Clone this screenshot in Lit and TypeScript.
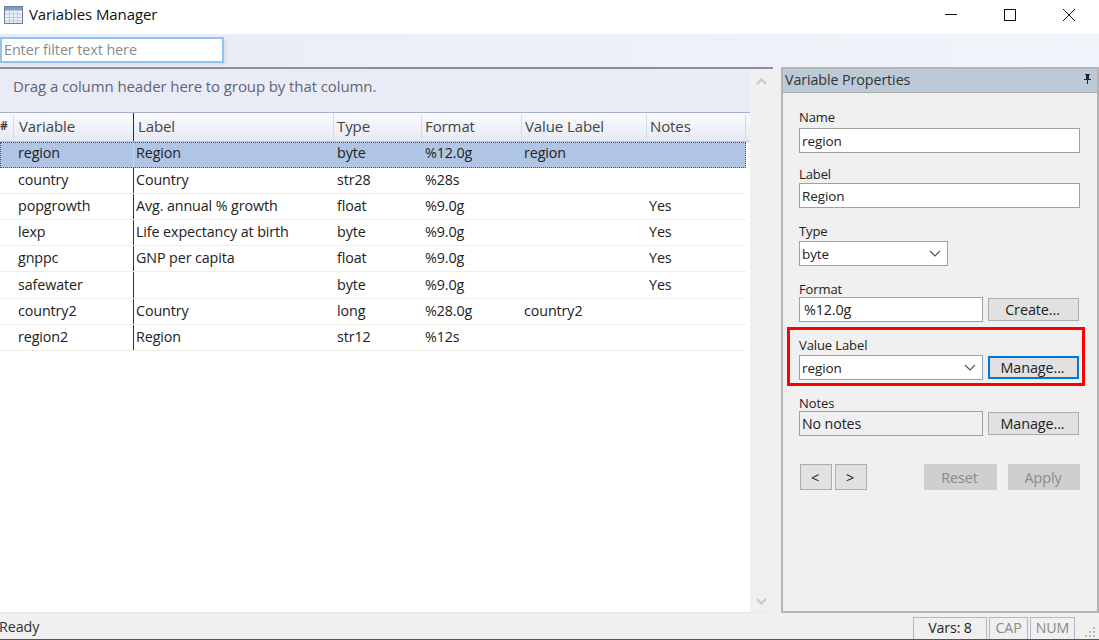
import { LitElement, html, css, svg } from "lit";
import { customElement } from "lit/decorators.js";

const rows = [
  ["region", "Region", "byte", "%12.0g", "region", ""],
  ["country", "Country", "str28", "%28s", "", ""],
  ["popgrowth", "Avg. annual % growth", "float", "%9.0g", "", "Yes"],
  ["lexp", "Life expectancy at birth", "byte", "%9.0g", "", "Yes"],
  ["gnppc", "GNP per capita", "float", "%9.0g", "", "Yes"],
  ["safewater", "", "byte", "%9.0g", "", "Yes"],
  ["country2", "Country", "long", "%28.0g", "country2", ""],
  ["region2", "Region", "str12", "%12s", "", ""],
];
const heads = ["Variable", "Label", "Type", "Format", "Value Label", "Notes"];
const chevron = svg`<svg class="chev" width="12" height="7" viewBox="0 0 12 7"><path d="M1 1l5 5 5-5" fill="none" stroke="#555" stroke-width="1.2"/></svg>`;

@customElement("app-root")
export class AppRoot extends LitElement {
  static styles = css`
    :host { display: flex; flex-direction: column; width: 1099px; height: 640px; overflow: hidden; background: #fff; color: #222;
      font-family: "Open Sans", "Noto Sans", sans-serif; font-size: 14.3px; letter-spacing: -0.1px; }
    .title { height: 34px; flex: none; display: flex; align-items: center; padding: 0 1px 0 4px; color: #111; }
    .title .name { flex: 1; font-size: 15px; margin-bottom: 6px; margin-left: 6px; }
    .appicon { margin-bottom: 4px; }
    .wb { width: 59px; display: flex; justify-content: center; margin-bottom: 4px; }
    .toolbar { height: 33px; flex: none; background: linear-gradient(90deg, #e9ecf6, #f1f4fb); display: flex; align-items: center; box-sizing: border-box; padding-bottom: 1px; }
    .filter { width: 224px; height: 26px; box-sizing: border-box; border: 2px solid #8fc3f0; background: #fff; color: #8a8a8a; padding-left: 2px; line-height: 22px; font-size: 14.4px; box-shadow: 3px 2px 2px rgba(0,0,0,.05); }
    .main { height: 546px; flex: none; display: flex; background: #f0f0f0; }
    .left { width: 773px; flex: none; display: flex; flex-direction: column; border-top: 2px solid #8b8f96; border-bottom: 1px solid #e6e6e6; box-sizing: border-box; background: #fff; position: relative; }
    .content { width: 750px; flex: 1; display: flex; flex-direction: column; }
    .group { height: 44px; flex: none; box-sizing: border-box; background: #e9ecf6; border-bottom: 1px solid #a9aecb; color: #5f6478; display: flex; align-items: center; padding: 0 0 10px 13px; font-size: 15px; }
    .head { height: 28.5px; flex: none; box-sizing: border-box; display: flex; background: linear-gradient(#fafbfe, #e6e9f4); border-bottom: 1px solid #b9c4de; font-size: 15px; }
    .row { height: 26.2px; display: flex; box-sizing: border-box; width: 746px; border-bottom: 1px solid #efeee6; }
    .row.sel { background: #afc5e3; outline: 1px dotted #555; outline-offset: -1px; border-bottom-color: transparent; }
    .c { box-sizing: border-box; white-space: nowrap; display: flex; align-items: center; overflow: hidden; padding-bottom: 2px; }
    .sel .c { padding-bottom: 3px; }
    .c0 { width: 14px; font-weight: 700; font-size: 12px; }
    .c1 { width: 119px; padding-left: 4px; }
    .c2 { width: 201px; padding-left: 2px; border-left: 1px solid #1c1cc4; }
    .c3 { width: 88px; padding-left: 3px; }
    .c4 { width: 100px; padding-left: 3px; }
    .c5 { width: 125px; padding-left: 2px; }
    .c6 { width: 99px; padding-left: 2px; }
    .head .c { color: #444; border-right: 1px solid #d5d9e8; margin: 2px 0; }
    .head .c1 { border-right: none; padding-left: 5px; }
    .head .c2 { padding-left: 4px; margin: 0; }
    .head .c3, .head .c4, .head .c5, .head .c6 { padding-left: 3px; }
    .row .c2.hl { border-left-color: #e8e060; }
    .scroll { position: absolute; right: 0; top: 0; bottom: 0; width: 23px; background: #f0f0f0; display: flex; flex-direction: column; justify-content: space-between; align-items: center; padding: 9px 0 7px; box-sizing: border-box; }
    .panel { margin-left: 8px; width: 318px; box-sizing: border-box; border: 2px solid #b4b4b4; display: flex; flex-direction: column; }
    .ptitle { height: 21px; flex: none; background: #bccad8; border-bottom: 1px solid #a9a9a9; display: flex; align-items: center; justify-content: space-between; padding: 0 5px 2px 2px; color: #333; font-size: 14.3px; box-sizing: content-box; }
    .pbody { flex: 1; padding: 16px 17px 0 16px; display: flex; flex-direction: column; font-size: 13.5px; }
    .lab { line-height: 16px; color: #222; height: 16px; font-size: 13px; }
    .fld { height: 25px; box-sizing: border-box; border: 1px solid #a0a0a0; background: #fff; display: flex; align-items: center; justify-content: space-between; padding: 0 6px 0 2px; margin-top: 3px; }
    .frow { display: flex; gap: 5px; align-items: center; }
    .frow .fld { width: 184px; margin-top: 0; }
    .btn { height: 23px; box-sizing: border-box; border: 1px solid #adadad; background: #e1e1e1; display: flex; align-items: center; justify-content: center; color: #222; width: 91px; font-size: 14.4px; padding-right: 2px; }
    .btn.focus { border: 2px solid #0078d7; }
    .btn.dis { background: #cfcfcf; color: #8a8a8a; border-color: #cfcfcf; }
    .gap { margin-top: 15px; }
    .gap2 { margin-top: 13px; }
    .box { position: relative; margin-top: 15px; }
    .box .frow { margin-top: 2px; }
    .red { position: absolute; left: -12px; right: -5px; top: -10px; bottom: -6px; border: 3px solid #f00; }
    .notes { margin-top: 15px; }
    .notes .fld { background: #f0f0f0; font-size: 14.2px; }
    .nav { display: flex; margin-top: 28px; padding-left: 1px; }
    .nav .btn { height: 26px; }
    .nav .btn.s { width: 32px; margin-right: 3px; }
    .nav .sp { flex: 1; }
    .nav .r { width: 73px; margin-right: 11px; }
    .nav .a { width: 72px; }
    .status { height: 26px; flex: none; background: #f0f0f0; box-sizing: border-box; display: flex; align-items: flex-end; }
    .ready { flex: 1; color: #333; line-height: 24px; margin-left: -1px; }
    .pane { height: 22px; box-sizing: border-box; border: 1px solid #b5b5c8; border-bottom: none; margin-right: 2px; display: flex; align-items: center; justify-content: center; font-size: 14.2px; padding-bottom: 3px; }
    .pane.off { color: #888; }
    .grip { width: 10px; height: 10px; margin: 0 4px 2px 10px; }
    .base { height: 1px; flex: none; background: #555; }
  `;

  renderRow(r: string[], i: number) {
    return html`<div class="row ${i === 0 ? "sel" : ""}">
      <div class="c c0"></div>
      <div class="c c1">${r[0]}</div>
      <div class="c c2 ${i === 0 ? "hl" : ""}">${r[1]}</div>
      <div class="c c3">${r[2]}</div>
      <div class="c c4">${r[3]}</div>
      <div class="c c5">${r[4]}</div>
      <div class="c c6">${r[5]}</div>
    </div>`;
  }

  render() {
    return html`
      <div class="title">
        <svg class="appicon" width="19" height="18" viewBox="0 0 19 18">
          <rect x="0.5" y="0.5" width="18" height="17" fill="#eef1f8" stroke="#6a7fa6"/>
          <rect x="1" y="1" width="17" height="3.5" fill="#7f9cc9"/>
          <path d="M1 8h17M1 11.5h17M1 15h17M5.5 4v13M9.5 4v13M13.5 4v13" stroke="#bcc8de" stroke-width="1"/>
        </svg>
        <span class="name">Variables Manager</span>
        <span class="wb"><svg width="12" height="12" viewBox="0 0 12 12"><path d="M0 5.5h12" stroke="#111"/></svg></span>
        <span class="wb"><svg width="12" height="12" viewBox="0 0 12 12"><rect x="0.5" y="0.5" width="11" height="11" fill="none" stroke="#111"/></svg></span>
        <span class="wb"><svg width="12" height="12" viewBox="0 0 12 12"><path d="M0 0l12 12M12 0L0 12" stroke="#111"/></svg></span>
      </div>
      <div class="toolbar"><div class="filter">Enter filter text here</div></div>
      <div class="main">
        <div class="left">
          <div class="content">
            <div class="group">Drag a column header here to group by that column.</div>
            <div class="head">
              <div class="c c0">#</div>
              ${heads.map((h, i) => html`<div class="c c${i + 1}">${h}</div>`)}
            </div>
            ${rows.map((r, i) => this.renderRow(r, i))}
          </div>
          <div class="scroll">
            <svg width="11" height="7" viewBox="0 0 11 7"><path d="M1 6l4.5-4.5L10 6" fill="none" stroke="#c8c8c8" stroke-width="2"/></svg>
            <svg width="11" height="7" viewBox="0 0 11 7"><path d="M1 1l4.5 4.5L10 1" fill="none" stroke="#c8c8c8" stroke-width="2"/></svg>
          </div>
        </div>
        <div class="panel">
          <div class="ptitle">
            <span>Variable Properties</span>
            <svg width="9" height="11" viewBox="0 0 9 11"><path d="M2 0h5v1H6v4h2v1H5v4H4V6H1V5h2V1H2z" fill="#222"/></svg>
          </div>
          <div class="pbody">
            <div class="lab">Name</div>
            <div class="fld">region</div>
            <div class="lab gap2">Label</div>
            <div class="fld" style="margin-top:1px">Region</div>
            <div class="lab gap">Type</div>
            <div class="fld" style="width:149px;margin-top:2px">byte ${chevron}</div>
            <div class="lab gap">Format</div>
            <div class="frow"><div class="fld" style="padding-left:4px;font-size:14.3px">%12.0g</div><div class="btn">Create...</div></div>
            <div class="box">
              <div class="red"></div>
              <div class="lab">Value Label</div>
              <div class="frow"><div class="fld">region ${chevron}</div><div class="btn focus">Manage...</div></div>
            </div>
            <div class="notes">
              <div class="lab">Notes</div>
              <div class="frow"><div class="fld">No notes</div><div class="btn">Manage...</div></div>
            </div>
            <div class="nav">
              <div class="btn s">&lt;</div><div class="btn s">&gt;</div>
              <div class="sp"></div>
              <div class="btn dis r">Reset</div><div class="btn dis a">Apply</div>
            </div>
          </div>
        </div>
      </div>
      <div class="status">
        <div class="ready">Ready</div>
        <div class="pane" style="width:74px">Vars: 8</div>
        <div class="pane off" style="width:39px">CAP</div>
        <div class="pane off" style="width:45px;margin-right:0">NUM</div>
        <svg class="grip" viewBox="0 0 10 10"><path d="M8 0h2v2H8zM4 4h2v2H4zM8 4h2v2H8zM0 8h2v2H0zM4 8h2v2H4zM8 8h2v2H8z" fill="#bbb"/></svg>
      </div>
      <div class="base"></div>
    `;
  }
}
